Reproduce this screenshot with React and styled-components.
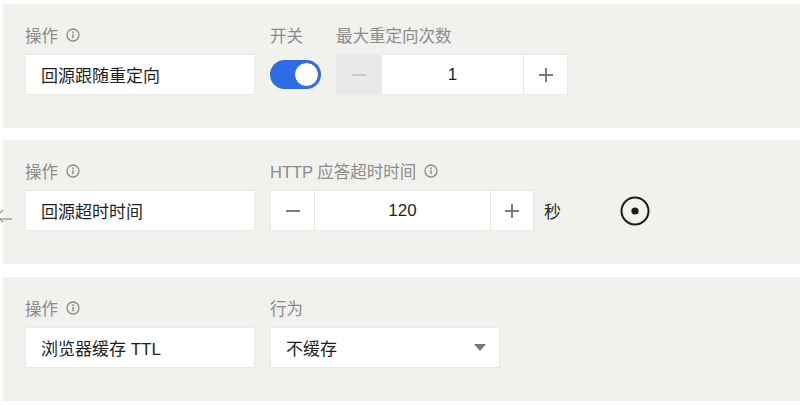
import React from 'react';
import styled, { createGlobalStyle } from 'styled-components';

const GlobalStyle = createGlobalStyle`
  html, body {
    margin: 0;
    padding: 0;
    background: #ffffff;
    font-family: "Liberation Sans", "Noto Sans CJK SC", sans-serif;
  }
`;

const Page = styled.div`
  width: 800px;
  height: 405px;
  overflow: hidden;
  padding-top: 4px;
  box-sizing: border-box;
  position: relative;
`;

const Panel = styled.div`
  margin-left: 3px;
  margin-bottom: ${p => p.gap || 12}px;
  height: 124px;
  box-sizing: border-box;
  padding: 21px 0 0 22px;
  background: #f1f2ee;
  display: flex;
  gap: 15px;
  align-items: flex-start;
`;

const Field = styled.div`
  display: flex;
  flex-direction: column;
`;

const Label = styled.div`
  display: flex;
  align-items: center;
  gap: 8px;
  height: 20px;
  margin-bottom: 9px;
  font-size: 16.5px;
  color: #8b8b8b;
  white-space: nowrap;
`;

const Control = styled.div`
  display: flex;
  align-items: center;
  height: 41px;
`;

const TextBox = styled.div`
  width: ${p => p.width || 230}px;
  height: 41px;
  box-sizing: border-box;
  background: #ffffff;
  border: 1px solid #e9eae6;
  padding-left: 15px;
  display: flex;
  align-items: center;
  font-size: 17px;
  color: #1f1f1f;
`;

const Switch = styled.div`
  width: 51px;
  height: 29px;
  border-radius: 15px;
  background: #2e6be6;
  box-sizing: border-box;
  padding: 2px;
  display: flex;
  justify-content: flex-end;
`;

const Knob = styled.div`
  width: 25px;
  height: 25px;
  border-radius: 50%;
  background: #ffffff;
  box-sizing: border-box;
  border: 1px solid #2a5fcc;
`;

const Stepper = styled.div`
  display: flex;
  height: 41px;
  gap: 1px;
  background: #e6e7e4;
  border: 1px solid #e9eae6;
  box-sizing: border-box;
`;

const StepButton = styled.div`
  width: ${p => p.w || 43}px;
  display: flex;
  align-items: center;
  justify-content: center;
  background: ${p => (p.disabled ? '#e8e9ea' : '#ffffff')};
  color: ${p => (p.disabled ? '#c4c5c6' : '#6e6e6e')};
`;

const StepValue = styled.div`
  width: ${p => p.width}px;
  background: #ffffff;
  display: flex;
  align-items: center;
  justify-content: center;
  font-size: 17px;
  color: #1f1f1f;
`;

const Unit = styled.span`
  margin-left: 10px;
  font-size: 17px;
  color: #2a2a2a;
`;

const RecordIcon = styled.div`
  margin-left: 59px;
  display: flex;
`;

const SelectArrow = styled.div`
  margin-left: auto;
  margin-right: 13px;
  width: 0;
  height: 0;
  border-left: 6px solid transparent;
  border-right: 6px solid transparent;
  border-top: 7px solid #777777;
`;

const EdgeArrow = styled.div`
  position: absolute;
  left: -6px;
  top: 208px;
`;

const InfoIcon = () => (
  <svg width="14" height="14" viewBox="0 0 14 14">
    <circle cx="7" cy="7" r="6" fill="none" stroke="#8b8b8b" strokeWidth="1.3" />
    <circle cx="7" cy="4.2" r="0.9" fill="#8b8b8b" />
    <rect x="6.3" y="5.9" width="1.4" height="4.4" fill="#8b8b8b" />
  </svg>
);

const Minus = () => (
  <svg width="16" height="16" viewBox="0 0 16 16">
    <rect x="1" y="7.1" width="14" height="1.8" fill="currentColor" />
  </svg>
);

const Plus = () => (
  <svg width="16" height="16" viewBox="0 0 16 16">
    <rect x="1" y="7.1" width="14" height="1.8" fill="currentColor" />
    <rect x="7.1" y="1" width="1.8" height="14" fill="currentColor" />
  </svg>
);

const App = () => (
  <>
    <GlobalStyle />
    <Page>
      <Panel>
        <Field>
          <Label>操作 <InfoIcon /></Label>
          <TextBox>回源跟随重定向</TextBox>
        </Field>
        <Field>
          <Label>开关</Label>
          <Control>
            <Switch><Knob /></Switch>
          </Control>
        </Field>
        <Field>
          <Label>最大重定向次数</Label>
          <Stepper>
            <StepButton disabled w={44}><Minus /></StepButton>
            <StepValue width={141}>1</StepValue>
            <StepButton w={43}><Plus /></StepButton>
          </Stepper>
        </Field>
      </Panel>

      <Panel gap={13}>
        <Field>
          <Label>操作 <InfoIcon /></Label>
          <TextBox>回源超时时间</TextBox>
        </Field>
        <Field>
          <Label>HTTP 应答超时时间 <InfoIcon /></Label>
          <Control>
            <Stepper>
              <StepButton w={43}><Minus /></StepButton>
              <StepValue width={175}>120</StepValue>
              <StepButton w={42}><Plus /></StepButton>
            </Stepper>
            <Unit>秒</Unit>
            <RecordIcon>
              <svg width="30" height="30" viewBox="0 0 30 30">
                <circle cx="15" cy="15" r="13.5" fill="none" stroke="#1b1b1b" strokeWidth="2" />
                <circle cx="15" cy="15" r="3.6" fill="#1b1b1b" />
              </svg>
            </RecordIcon>
          </Control>
        </Field>
      </Panel>

      <Panel>
        <Field>
          <Label>操作 <InfoIcon /></Label>
          <TextBox>浏览器缓存 TTL</TextBox>
        </Field>
        <Field>
          <Label>行为</Label>
          <TextBox>
            不缓存
            <SelectArrow />
          </TextBox>
        </Field>
      </Panel>

      <EdgeArrow>
        <svg width="20" height="16" viewBox="0 0 20 16">
          <path d="M9 2 L3 8 L9 14" fill="none" stroke="#8a8a8a" strokeWidth="1.2" />
          <path d="M3 11 H18" fill="none" stroke="#8a8a8a" strokeWidth="1.2" />
        </svg>
      </EdgeArrow>
    </Page>
  </>
);

export default App;
